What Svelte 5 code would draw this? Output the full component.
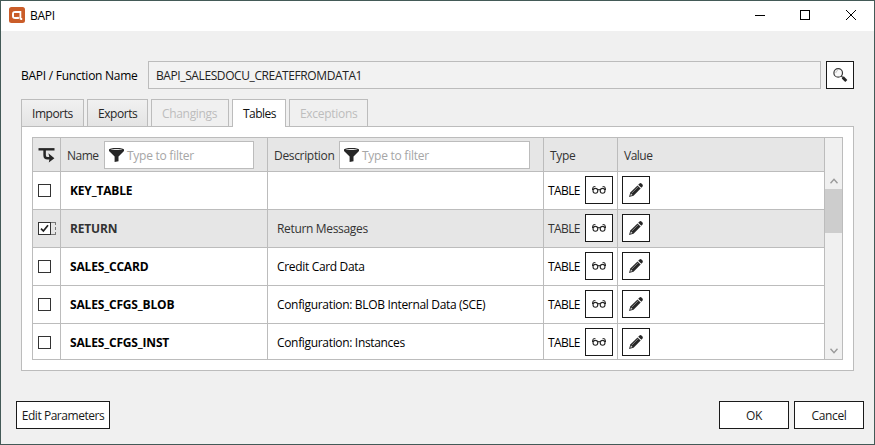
<script>
  const tabs = [
    { label: 'Imports', cls: 'imports' },
    { label: 'Exports', cls: 'exports' },
    { label: 'Changings', cls: 'changings disabled' },
    { label: 'Tables', cls: 'tables active' },
    { label: 'Exceptions', cls: 'exceptions disabled' }
  ];
  let rows = $state([
    { name: 'KEY_TABLE', desc: '', checked: false },
    { name: 'RETURN', desc: 'Return Messages', checked: true },
    { name: 'SALES_CCARD', desc: 'Credit Card Data', checked: false },
    { name: 'SALES_CFGS_BLOB', desc: 'Configuration: BLOB Internal Data (SCE)', checked: false },
    { name: 'SALES_CFGS_INST', desc: 'Configuration: Instances', checked: false }
  ]);
</script>

{#snippet funnel()}
  <svg class="funnel" width="15" height="14" viewBox="0 0 15 14">
    <path d="M0 1.8C0 .5 3.4 0 7.5 0S15 .5 15 1.8V3L9.5 8.4v4.8L5.6 14V8.4L0 3Z" fill="#262626" />
    <path d="M1.6 1.5C4 .8 11 .8 13.4 1.5 11 2.2 4 2.2 1.6 1.5Z" fill="#e8e8e8" />
  </svg>
{/snippet}

<div class="window">
  <header>
    <svg class="logo" width="16" height="16" viewBox="0 0 16 16">
      <rect width="16" height="16" rx="2.5" fill="#ca5d29" />
      <path d="M8.9 8V10.9H6.2Q4 10.9 4 8.9V7Q4 4.9 6.3 4.9H11.3V10.4Q11.3 11.9 12.4 11.9H13.2" fill="none" stroke="#fff" stroke-width="2" />
      <path d="M5 6H10.3V9.9H5Z" fill="#ca5d29" />
    </svg>
    <span class="title">BAPI</span>
    <svg class="controls" width="110" height="12" viewBox="0 0 110 12" fill="none" stroke="#000">
      <path d="M0 6.5H10" />
      <rect x="45.5" y="1.5" width="9" height="9" />
      <path d="M91 1L101 11M101 1L91 11" />
    </svg>
  </header>

  <div class="function">
    <span class="label">BAPI / Function Name</span>
    <div class="field">BAPI_SALESDOCU_CREATEFROMDATA1</div>
    <button class="square" aria-label="Search">
      <svg width="16" height="16" viewBox="0 0 16 16" fill="none">
        <circle cx="6.2" cy="5.9" r="4.3" fill="#fafafa" stroke="#3a3a3a" stroke-width="1.2" />
        <path d="M3.8 6A2.6 2.6 0 0 1 6 3.4" stroke="#aaa" stroke-width=".7" />
        <path d="M9.3 9L11 10.7" stroke="#333" stroke-width="1.1" />
        <path d="M10.7 10.4L14.3 14" stroke="#262626" stroke-width="2.9" />
      </svg>
    </button>
  </div>

  <nav>
    {#each tabs as t}<div class="tab {t.cls}"><span>{t.label}</span></div>{/each}
  </nav>

  <main>
    <div class="table">
      <div class="grid">
        <div class="row head">
          <div class="c-check">
            <svg width="17" height="16" viewBox="0 0 17 16">
              <path d="M.5 2.3H16.5" stroke="#262626" stroke-width="2.4" />
              <path d="M6.6 3V8.2Q6.6 11.3 9.6 11.3H13" fill="none" stroke="#262626" stroke-width="2.5" />
              <path d="M10.4 6.2L16.4 11.2 10.8 15.6 11.6 11.2Z" fill="#262626" />
            </svg>
          </div>
          <div class="c-name"><span>Name</span><label>{@render funnel()}<i>Type to filter</i></label></div>
          <div class="c-desc"><span>Description</span><label>{@render funnel()}<i>Type to filter</i></label></div>
          <div class="c-type"><span>Type</span></div>
          <div class="c-value"><span>Value</span></div>
        </div>
        {#each rows as r}
          <div class="row" class:selected={r.checked}>
            <div class="c-check">
              <button class="box" aria-label={r.name} onclick={() => (r.checked = !r.checked)}>
                {#if r.checked}
                  <svg width="11" height="11" viewBox="0 0 11 11"><path d="M2 5.6L4.4 8 9 2.2" fill="none" stroke="#222" stroke-width="1.7" /></svg>
                {/if}
              </button>
              {#if r.checked}<em></em>{/if}
            </div>
            <div class="c-name"><b>{r.name}</b></div>
            <div class="c-desc"><span>{r.desc}</span></div>
            <div class="c-type">
              <span>TABLE</span>
              <button class="square" aria-label="View">
                <svg width="16" height="16" viewBox="0 0 16 16" fill="none" stroke="#262626">
                  <circle cx="4.4" cy="8.8" r="2.4" stroke-width="1.1" />
                  <circle cx="11.6" cy="8.8" r="2.4" stroke-width="1.1" />
                  <path d="M1.7 8V6.2Q1.9 4.4 4.4 4.5M14.3 8V6.2Q14.1 4.4 11.6 4.5M1 7.5H2.6M13.4 7.5H15M6.6 8Q8 7 9.4 8" stroke-width="1.1" />
                </svg>
              </button>
            </div>
            <div class="c-value">
              <button class="square" aria-label="Edit">
                <svg width="16" height="16" viewBox="0 0 16 16">
                  <path d="M1 15L2.3 10.6 9.5 3.4 12.7 6.6 5.5 13.7Z" fill="#262626" />
                  <path d="M10.2 2.7L11.5 1.5Q12.4.7 13.5 1.6L14.5 2.6Q15.3 3.6 14.5 4.6L13.4 5.8Z" fill="#262626" />
                  <path d="M3.7 11.2L10 4.9" stroke="#aaa" stroke-width=".7" />
                  <path d="M2.3 13.7L2.9 11.5 4.6 13.1Z" fill="#ddd" />
                </svg>
              </button>
            </div>
          </div>
        {/each}
      </div>
      <div class="scroll">
        <svg width="8" height="6" viewBox="0 0 8 6"><path d="M.5 5.2L4 1.2 7.5 5.2" fill="none" stroke="#999" stroke-width="1.4" /></svg>
        <div class="thumb"></div>
        <svg class="down" width="8" height="6" viewBox="0 0 8 6"><path d="M.5 .8L4 4.8 7.5 .8" fill="none" stroke="#999" stroke-width="1.4" /></svg>
      </div>
    </div>
  </main>

  <footer>
    <button class="edit">Edit Parameters</button>
    <button class="ok">OK</button>
    <button class="cancel">Cancel</button>
  </footer>
</div>

<style>
  * { box-sizing: border-box; }
  .window {
    width: 875px; height: 445px; display: flex; flex-direction: column;
    border: 1px solid #435a57; background: #f0f0f0; color: #000; overflow: hidden;
    font: 12px/16px "Open Sans", "Noto Sans", sans-serif; letter-spacing: -0.33px; white-space: nowrap;
  }
  button { font: inherit; letter-spacing: inherit; color: #1a1a1a; background: #fff; border: 1px solid #1a1a1a; padding: 0; border-radius: 0; }
  svg { display: block; flex: none; }
  header { height: 30px; flex: none; background: #fff; display: flex; align-items: center; padding: 0 9px 2px 8px; }
  .title { margin-left: 5px; padding-top: 2px; letter-spacing: -0.3px; }
  .controls { margin-left: auto; }
  .function { display: flex; align-items: center; margin-top: 30px; padding-left: 20px; height: 28px; flex: none; }
  .label { width: 127px; padding-top: 2px; letter-spacing: -0.26px; }
  .field { width: 673px; height: 28px; border: 1px solid #bcbcbc; background: #f2f2f2; padding: 6px 7px; line-height: 16px; color: #222; margin-right: 5px; letter-spacing: -0.4px; }
  .square { width: 28px; height: 28px; flex: none; display: flex; align-items: center; justify-content: center; }
  nav { display: flex; gap: 3px; margin: 10px 0 0 20px; height: 28px; flex: none; }
  .tab { height: 27px; border: 1px solid #bcbcbc; border-bottom: 0; background: linear-gradient(#f1f1f1, #e4e4e4); padding: 6px 0 0 10px; color: #262626; }
  .imports { width: 63px; letter-spacing: -0.45px; }
  .exports { width: 61px; letter-spacing: -0.45px; }
  .changings { width: 78px; }
  .tables { width: 54px; }
  .exceptions { width: 79px; letter-spacing: -0.3px; }
  .tab.disabled { background: #f0f0f0; color: #bdbdbd; }
  .tab.active { background: #fff; height: 28px; z-index: 1; color: #111; letter-spacing: -0.55px; }
  main { margin: -1px 0 0 20px; width: 833px; height: 245px; border: 1px solid #bcbcbc; background: #fff; padding: 10px; flex: none; }
  .table { width: 811px; height: 223px; border: 1px solid #bcbcbc; display: flex; overflow: hidden; }
  .grid { width: 791px; height: 221px; overflow: hidden; flex: none; }
  .row { display: flex; height: 38px; border-bottom: 1px solid #bcbcbc; }
  .head { height: 34px; background: #e6e6e6; color: #333; }
  .selected { background: #e6e6e6; color: #333; }
  .row > div { display: flex; align-items: center; border-right: 1px solid #bcbcbc; flex: none; }
  .row > .c-check { width: 28px; padding-left: 5px; }
  .row > .c-name { width: 207px; padding-left: 9px; }
  .row > .c-desc { width: 276px; padding-left: 9px; }
  .row > .c-type { width: 74px; padding-left: 4px; }
  .row > .c-value { width: 206px; padding-left: 4px; border-right: 0; }
  .row.head > .c-name, .row.head > .c-desc, .row.head > .c-type, .row.head > .c-value { padding-left: 6px; }
  .head span { padding-top: 3px; }
  .head .c-name span { letter-spacing: -0.5px; }
  .head .c-value span { letter-spacing: -0.5px; }
  b { font-weight: 700; letter-spacing: -0.17px; }
  .box { width: 13px; height: 13px; flex: none; border-color: #333; }
  em { width: 5px; height: 13px; border: 1px dashed #777; border-left: 0; }
  label { height: 28px; border: 1px solid #bcbcbc; background: #fff; display: flex; align-items: center; padding-left: 4px; margin-left: auto; }
  .c-name label { width: 150px; margin-right: 13px; }
  .c-desc label { width: 191px; margin-right: 13px; }
  i { font-style: normal; color: #a6a6a6; margin-left: 3px; padding-top: 2px; letter-spacing: -0.26px; }
  .row .square { margin-bottom: 1px; }
  .c-type .square { margin-left: auto; margin-right: 4px; }
  .row:not(.head) .c-type span { letter-spacing: -0.6px; }
  .scroll { width: 18px; border-left: 1px solid #bcbcbc; background: #f0f0f0; display: flex; flex-direction: column; align-items: center; padding: 40px 0 5px; }
  .thumb { width: 17px; height: 44px; background: #cdcdcd; margin-top: 5px; flex: none; }
  .down { margin-top: auto; }
  footer { display: flex; margin: 30px 10px 0 15px; height: 28px; }
  footer button { padding-top: 2px; }
  .edit { width: 94px; letter-spacing: -0.46px; }
  .ok { width: 70px; margin-left: auto; }
  .cancel { width: 70px; margin-left: 5px; }
</style>
